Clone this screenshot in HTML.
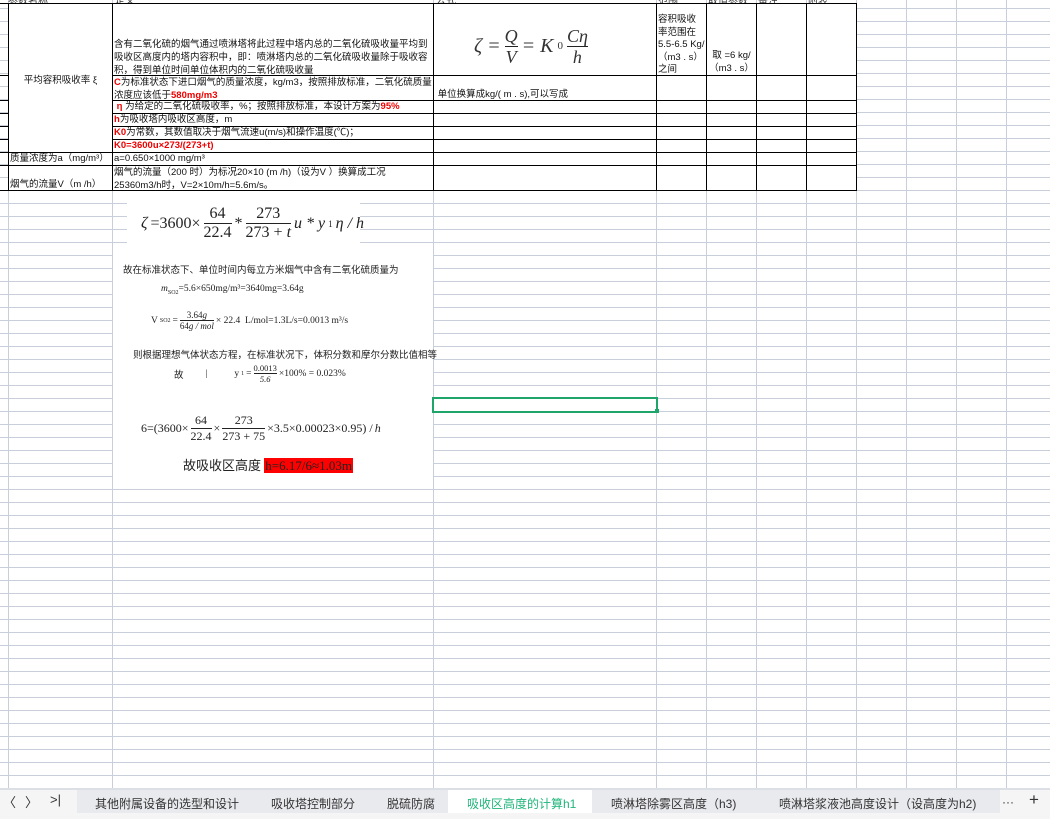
<!DOCTYPE html>
<html><head><meta charset="utf-8"><style>
body{margin:0;width:1050px;height:819px;overflow:hidden;background:#fff;position:relative;font-family:"Liberation Sans","Noto Sans CJK SC",sans-serif;}
.grid{position:absolute;left:0;top:0;width:1050px;height:790px;
background-image:repeating-linear-gradient(to bottom,transparent 0,transparent 12px,#c9cedb 12px,#c9cedb 13px),
linear-gradient(to right,transparent 8px,#c9cedb 8px,#c9cedb 9px,transparent 9px,transparent 112px,#c9cedb 112px,#c9cedb 113px,transparent 113px,transparent 433px,#c9cedb 433px,#c9cedb 434px,transparent 434px,transparent 656px,#c9cedb 656px,#c9cedb 657px,transparent 657px,transparent 706px,#c9cedb 706px,#c9cedb 707px,transparent 707px,transparent 756px,#c9cedb 756px,#c9cedb 757px,transparent 757px,transparent 806px,#c9cedb 806px,#c9cedb 807px,transparent 807px,transparent 856px,#c9cedb 856px,#c9cedb 857px,transparent 857px,transparent 906px,#c9cedb 906px,#c9cedb 907px,transparent 907px,transparent 956px,#c9cedb 956px,#c9cedb 957px,transparent 957px,transparent 1006px,#c9cedb 1006px,#c9cedb 1007px,transparent 1007px);
background-position:0 -4px,0 0;}
.c{position:absolute;border:1px solid #000;box-sizing:border-box;background:#fff;font-size:9.5px;line-height:13px;color:#111;overflow:hidden;padding:0 1px;}
.r{color:#e00;font-weight:bold}
.ab{position:absolute;white-space:nowrap;}
.img{position:absolute;background:#fff;font-family:"Liberation Serif","Noto Serif CJK SC",serif;color:#222;}
.fr{display:inline-block;vertical-align:middle;text-align:center;}
.fr span{display:block;}
.fr span:first-child{border-bottom:1px solid #222;}
.tab{position:absolute;top:795px;font-size:12px;color:#333;white-space:nowrap}
</style></head><body>
<div class="grid"></div>
<div class="ab" style="left:8px;top:-8px;font-size:10px;color:#333">参数名称</div>
<div class="ab" style="left:115px;top:-8px;font-size:10px;color:#333">定义</div>
<div class="ab" style="left:436px;top:-8px;font-size:10px;color:#333">公式</div>
<div class="ab" style="left:658px;top:-8px;font-size:10px;color:#333">范围</div>
<div class="ab" style="left:708px;top:-8px;font-size:10px;color:#333">取值参数</div>
<div class="ab" style="left:758px;top:-8px;font-size:10px;color:#333">备注</div>
<div class="ab" style="left:808px;top:-8px;font-size:10px;color:#333">附表</div>

<div class="c" style="left:8px;top:3px;width:105px;height:150px;display:flex;align-items:center;justify-content:center;padding-top:4px">平均容积吸收率 ξ</div>
<div class="c" style="left:8px;top:152px;width:105px;height:14px;line-height:12px">质量浓度为a（mg/m³）</div>
<div class="c" style="left:8px;top:165px;width:105px;height:26px;padding-top:12px">烟气的流量V（m /h）</div>
<div class="c" style="left:112px;top:3px;width:322px;height:73px;padding-top:34px;font-size:9.5px">含有二氧化硫的烟气通过喷淋塔将此过程中塔内总的二氧化硫吸收量平均到吸收区高度内的塔内容积中，即：喷淋塔内总的二氧化硫吸收量除于吸收容积，得到单位时间单位体积内的二氧化硫吸收量</div>
<div class="c" style="left:112px;top:75px;width:322px;height:26px"><span class="r">C</span>为标准状态下进口烟气的质量浓度，kg/m3，按照排放标准，二氧化硫质量浓度应该低于<span class="r">580mg/m3</span></div>
<div class="c" style="left:112px;top:100px;width:322px;height:14px;line-height:12px">&nbsp;<span class="r">η</span> 为给定的二氧化硫吸收率，%；按照排放标准，本设计方案为<span class="r">95%</span></div>
<div class="c" style="left:112px;top:113px;width:322px;height:14px;line-height:12px"><span class="r">h</span>为吸收塔内吸收区高度，m</div>
<div class="c" style="left:112px;top:126px;width:322px;height:14px;line-height:12px"><span class="r">K0</span>为常数，其数值取决于烟气流速u(m/s)和操作温度(℃)；</div>
<div class="c" style="left:112px;top:139px;width:322px;height:14px;line-height:12px"><span class="r">K0=3600u×273/(273+t)</span></div>
<div class="c" style="left:112px;top:152px;width:322px;height:14px;line-height:12px">a=0.650×1000 mg/m³</div>
<div class="c" style="left:112px;top:165px;width:322px;height:26px">烟气的流量（200 时）为标况20×10 (m /h)（设为V ）换算成工况25360m3/h时，V=2×10m/h=5.6m/s。</div>
<div class="c" style="left:433px;top:3px;width:224px;height:73px">
 <div class="ab" style="left:40px;top:22px;font-family:'Liberation Serif',serif;font-style:italic;font-size:20px;color:#333;display:flex;align-items:center;gap:4px">ζ =<span class="fr" style="font-size:18px;line-height:20px"><span>Q</span><span>V</span></span>= K<sub style="font-size:11px;font-style:normal">0</sub> <span class="fr" style="font-size:18px;line-height:20px"><span>Cη</span><span>h</span></span></div>
</div>
<div class="c" style="left:433px;top:75px;width:224px;height:26px;padding-top:12px">&nbsp;单位换算成kg/( m . s),可以写成</div>
<div class="c" style="left:433px;top:100px;width:224px;height:14px"></div>
<div class="c" style="left:433px;top:113px;width:224px;height:14px"></div>
<div class="c" style="left:433px;top:126px;width:224px;height:14px"></div>
<div class="c" style="left:433px;top:139px;width:224px;height:14px"></div>
<div class="c" style="left:433px;top:152px;width:224px;height:14px"></div>
<div class="c" style="left:433px;top:165px;width:224px;height:26px"></div>
<div class="c" style="left:656px;top:3px;width:51px;height:73px;padding-top:10px;line-height:12.5px">容积吸收率范围在5.5-6.5 Kg/（m3 . s）之间</div>
<div class="c" style="left:706px;top:3px;width:51px;height:73px;padding-top:46px;line-height:12.5px;text-align:center">取 =6 kg/（m3 . s）</div>
<div class="c" style="left:756px;top:3px;width:51px;height:73px"></div>
<div class="c" style="left:806px;top:3px;width:51px;height:73px"></div>
<div class="ab" style="left:656px;top:75px;width:201px;height:116px;border:1px solid #000;box-sizing:border-box;
background:linear-gradient(to right,transparent 49px,#000 49px,#000 50px,transparent 50px,transparent 99px,#000 99px,#000 100px,transparent 100px,transparent 149px,#000 149px,#000 150px,transparent 150px),
linear-gradient(to bottom,transparent 24px,#000 24px,#000 25px,transparent 25px,transparent 37px,#000 37px,#000 38px,transparent 38px,transparent 50px,#000 50px,#000 51px,transparent 51px,transparent 63px,#000 63px,#000 64px,transparent 64px,transparent 76px,#000 76px,#000 77px,transparent 77px,transparent 89px,#000 89px,#000 90px,transparent 90px),#fff"></div>
<div class="ab" style="left:0;top:3px;width:8px;height:188px;border-top:1px solid #000;border-bottom:1px solid #000;box-sizing:border-box;background:linear-gradient(to bottom,transparent 71px,#000 71px,#000 72px,transparent 72px,transparent 96px,#000 96px,#000 97px,transparent 97px,transparent 109px,#000 109px,#000 110px,transparent 110px,transparent 122px,#000 122px,#000 123px,transparent 123px,transparent 135px,#000 135px,#000 136px,transparent 136px,transparent 148px,#000 148px,#000 149px,transparent 149px,transparent 161px,#000 161px,#000 162px,transparent 162px)"></div>

<div class="img" style="left:127px;top:197px;width:233px;height:57px">
 <div class="ab" style="left:14px;top:8px;font-size:16px;display:flex;align-items:center;gap:3px"><i>ζ</i>=3600×<span class="fr"><span>64</span><span>22.4</span></span>*<span class="fr"><span>273</span><span>273 + <i>t</i></span></span><i>u * y</i><sub style="font-size:9px">1</sub><i>η / h</i></div>
</div>
<div class="img" style="left:113px;top:255px;width:320px;height:154px;font-size:10px">
 <div class="ab" style="left:10px;top:7px;font-family:'Noto Sans CJK SC',sans-serif;font-size:9.5px">故在标准状态下、单位时间内每立方米烟气中含有二氧化硫质量为</div>
 <div class="ab" style="left:48px;top:29px;font-size:9.5px"><i>m</i><sub style="font-size:6px">SO2</sub>=5.6×650mg/m³=3640mg=3.64g</div>
 <div class="ab" style="left:38px;top:55px;font-size:9.5px;display:flex;align-items:center;gap:2px">V<sub style="font-size:6px">SO2</sub>=<span class="fr" style="font-size:9px"><span>3.64<i>g</i></span><span>64<i>g / mol</i></span></span>× 22.4 &nbsp;L/mol=1.3L/s=0.0013 m³/s</div>
 <div class="ab" style="left:20px;top:92px;font-family:'Noto Sans CJK SC',sans-serif;font-size:9.5px">则根据理想气体状态方程，在标准状况下，体积分数和摩尔分数比值相等</div>
 <div class="ab" style="left:61px;top:108px;font-size:9.5px;display:flex;align-items:center;gap:2px"><span style="font-family:'Noto Sans CJK SC'">故</span><span style="margin-left:20px;margin-right:25px">|</span>y<sub style="font-size:6px">1</sub>=<span class="fr" style="font-size:8.5px"><span>0.0013</span><span><i>5.6</i></span></span>×100% = 0.023%</div>
</div>
<div class="img" style="left:113px;top:411px;width:320px;height:68px">
 <div class="ab" style="left:28px;top:2px;font-size:12px;display:flex;align-items:center;gap:2px">6=(3600×<span class="fr"><span>64</span><span>22.4</span></span>×<span class="fr"><span>273</span><span>273 + 75</span></span>×3.5×0.00023×0.95) / <i>h</i></div>
 <div class="ab" style="left:70px;top:44px;font-size:13px"><span style="font-family:'Noto Sans CJK SC'">故吸收区高度</span> <span style="background:#f00;color:#222;padding:0 1px">h=6.17/6≈1.03m</span></div>
</div>
<div class="ab" style="left:432px;top:397px;width:226px;height:16px;border:2px solid #1fa56a;box-sizing:border-box"></div>
<div class="ab" style="left:655px;top:409px;width:4px;height:4px;background:#1fa56a"></div>

<div class="ab" style="left:0;top:788px;width:1050px;height:2px;background:#dcdfe6"></div>
<div class="ab" style="left:0;top:790px;width:1050px;height:29px;background:#f5f5f6"></div>
<div class="ab" style="left:77px;top:790px;width:923px;height:23px;background:#e9eaee"></div>
<div class="ab" style="left:448px;top:790px;width:144px;height:23px;background:#fff"></div>
<div class="tab" style="left:3px;font-size:13px;top:792px">〈</div>
<div class="tab" style="left:25px;font-size:13px;top:792px">〉</div>
<div class="tab" style="left:50px;font-size:13px;top:792px">&gt;|</div>
<div class="tab" style="left:95px">其他附属设备的选型和设计</div>
<div class="tab" style="left:271px">吸收塔控制部分</div>
<div class="tab" style="left:387px">脱硫防腐</div>
<div class="tab" style="left:467px;color:#1fb57a">吸收区高度的计算h1</div>
<div class="tab" style="left:611px">喷淋塔除雾区高度（h3)</div>
<div class="tab" style="left:779px">喷淋塔浆液池高度设计（设高度为h2)</div>
<div class="tab" style="left:1002px">···</div>
<div class="tab" style="left:1029px;font-size:17px;top:790px">+</div>
</body></html>
